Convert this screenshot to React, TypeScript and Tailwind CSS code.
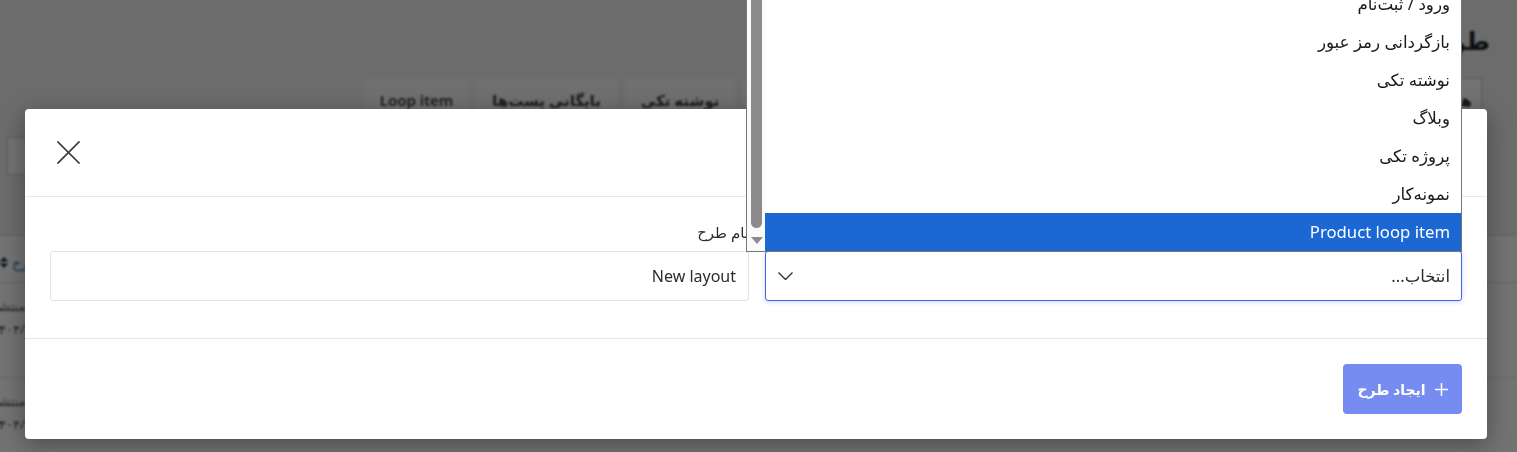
import React from "react";

const FONT = "font-['Noto_Sans','DejaVu_Sans',sans-serif]";

type Tab = { label: string; w: string; active?: boolean };

const tabs: Tab[] = [
  { label: "همه", w: "w-[50px]", active: true },
  { label: "هدر", w: "w-[60px]" },
  { label: "فوتر", w: "w-[64px]" },
  { label: "برگه ۴۰۴", w: "w-[90px]" },
  { label: "وبلاگ", w: "w-[72px]" },
  { label: "پروژه تکی", w: "w-[104px]" },
  { label: "نمونه‌کار", w: "w-[96px]" },
  { label: "جستجو", w: "w-[72px]" },
  { label: "محصول", w: "w-[67px]" },
  { label: "نوشته تکی", w: "w-[110px]" },
  { label: "بایگانی پست‌ها", w: "w-[141px]" },
  { label: "Loop item", w: "w-[103px]" },
];

const options = [
  "ورود / ثبت‌نام",
  "بازگردانی رمز عبور",
  "نوشته تکی",
  "وبلاگ",
  "پروژه تکی",
  "نمونه‌کار",
  "Product loop item",
];

function CloseIcon() {
  return (
    <svg width="23" height="23" viewBox="0 0 23 23" fill="none">
      <path d="M1 1L22 22M22 1L1 22" stroke="#3a3a3a" strokeWidth="1.7" strokeLinecap="square" />
    </svg>
  );
}

function ChevronDown() {
  return (
    <svg width="15" height="8" viewBox="0 0 15 8" fill="none">
      <path d="M0.5 0.5L7.5 7.5L14.5 0.5" stroke="#333" strokeWidth="1.4" />
    </svg>
  );
}

function PlusIcon() {
  return (
    <svg width="13" height="13" viewBox="0 0 13 13" fill="none">
      <path d="M6.5 0V13M0 6.5H13" stroke="#fff" strokeWidth="1.5" />
    </svg>
  );
}

function SortIcon() {
  return (
    <svg width="8" height="11" viewBox="0 0 8 11">
      <path d="M4 0L8 4.5H0Z M4 11L8 6.5H0Z" fill="#1d2327" />
    </svg>
  );
}

function BackgroundPage() {
  return (
    <div className="flex h-full flex-col">
      <div className="pr-[27px] pt-[22px]">
        <h1 className="text-[25px] font-bold leading-[36px] text-[#1d2327]">طرح‌ها</h1>
      </div>
      <div className="mt-[20px] flex gap-2 pr-[35px]">
        {tabs.map((t) => (
          <div
            key={t.label}
            className={`flex h-[44px] shrink-0 items-center justify-center text-[15px] font-semibold ${t.w} ${
              t.active
                ? "border border-[#c3c4c7] bg-white text-[#1d2327]"
                : "bg-[#f8f8f8] text-[#3c434a]"
            }`}
          >
            {t.label}
          </div>
        ))}
      </div>
      <div className="mt-[15px] flex justify-end pl-[7px]">
        <div className="h-[38px] w-[220px] rounded-[3px] border border-[#c3c4c7] bg-white" />
      </div>
      <div className="mt-[60px] -ml-[12px] flex-1 bg-white">
        <div className="flex h-[47px] items-center justify-end gap-[4px] border-t border-[#dcdcde] pl-[12px] pt-[6px]">
          <span className="text-[14px] text-[#2271b1]">نام طرح</span>
          <SortIcon />
        </div>
        {[0, 1].map((i) => (
          <div
            key={i}
            className="flex h-[95px] flex-col items-end border-t border-[#dcdcde] pl-[4px] pt-[12px] text-[13px] leading-[23px] text-[#50575e]"
          >
            <span>منتشر</span>
            <span>۱۴۰۴/۰۴/۲۰</span>
          </div>
        ))}
      </div>
    </div>
  );
}

function OptionsPopup() {
  return (
    <div
      dir="ltr"
      className="absolute bottom-[calc(100%-1px)] right-0 flex w-[calc(100%+19px)] border border-[#767676] bg-white"
    >
      <div className="flex w-[18px] shrink-0 flex-col bg-[#fafafa]">
        <div className="ml-[4px] mr-[3px] flex-1 rounded-b-[6px] bg-[#8b8b8b]" />
        <div className="flex h-[23px] items-start justify-center pl-[1px] pt-[9px]">
          <svg width="12" height="7" viewBox="0 0 12 7">
            <path d="M0 0H12L6 7Z" fill="#8b8b8b" />
          </svg>
        </div>
      </div>
      <div dir="rtl" className="flex-1">
        {options.map((o, i) => {
          const selected = i === options.length - 1;
          return (
            <div
              key={o}
              className={`flex h-[38px] items-center pr-[11px] text-[16.7px] ${
                selected ? "bg-[#1b67d3] text-white" : "text-[#1a1a1a]"
              }`}
            >
              {o}
            </div>
          );
        })}
      </div>
    </div>
  );
}

function CreateLayoutDialog() {
  return (
    <div className="absolute left-[25px] top-[109px] w-[1462px] rounded-[4px] bg-white shadow-[0_6px_24px_rgba(0,0,0,0.35)]">
      <div className="flex h-[88px] items-center border-b border-[#e8e8e8] pl-[32px]" dir="ltr">
        <button type="button" className="flex items-center justify-center">
          <CloseIcon />
        </button>
      </div>
      <div className="grid grid-cols-[697px_699px] gap-[16px] px-[25px] pb-[37px] pt-[25px]">
        <div className="flex flex-col">
          <label className="mb-[9px] h-[20px] text-[15px] leading-[20px] text-[#2c2c2c]">نوع طرح</label>
          <div className="relative">
            <OptionsPopup />
            <div className="flex h-[50px] items-center justify-between rounded-[3px] border border-[#3d63ea] pl-[12px] pr-[11px] shadow-[0_1px_5px_rgba(61,99,234,0.25)]">
              <span className="text-[16.5px] text-[#2c2c2c]">انتخاب...</span>
              <ChevronDown />
            </div>
          </div>
        </div>
        <div className="flex flex-col">
          <label className="mb-[9px] h-[20px] text-[15px] leading-[20px] text-[#2c2c2c]">نام طرح</label>
          <div className="flex h-[50px] items-center rounded-[3px] border border-[#e3e3e3] px-[12px] text-[16px] text-[#2c2c2c]">
            New layout
          </div>
        </div>
      </div>
      <div className="flex border-t border-[#e8e8e8] px-[25px] pb-[25px] pt-[25px]">
        <button
          type="button"
          className="flex h-[50px] w-[119px] items-center justify-center gap-[9px] rounded-[4px] bg-[#768cf0] text-[14px] font-bold text-white"
        >
          <PlusIcon />
          <span>ایجاد طرح</span>
        </button>
      </div>
    </div>
  );
}

export default function App() {
  return (
    <div dir="rtl" className={`relative h-[452px] w-full overflow-hidden bg-[#f0f0f1] ${FONT}`}>
      <BackgroundPage />
      <div className="absolute inset-0 bg-black/55 backdrop-blur-[1px]" />
      <CreateLayoutDialog />
    </div>
  );
}
